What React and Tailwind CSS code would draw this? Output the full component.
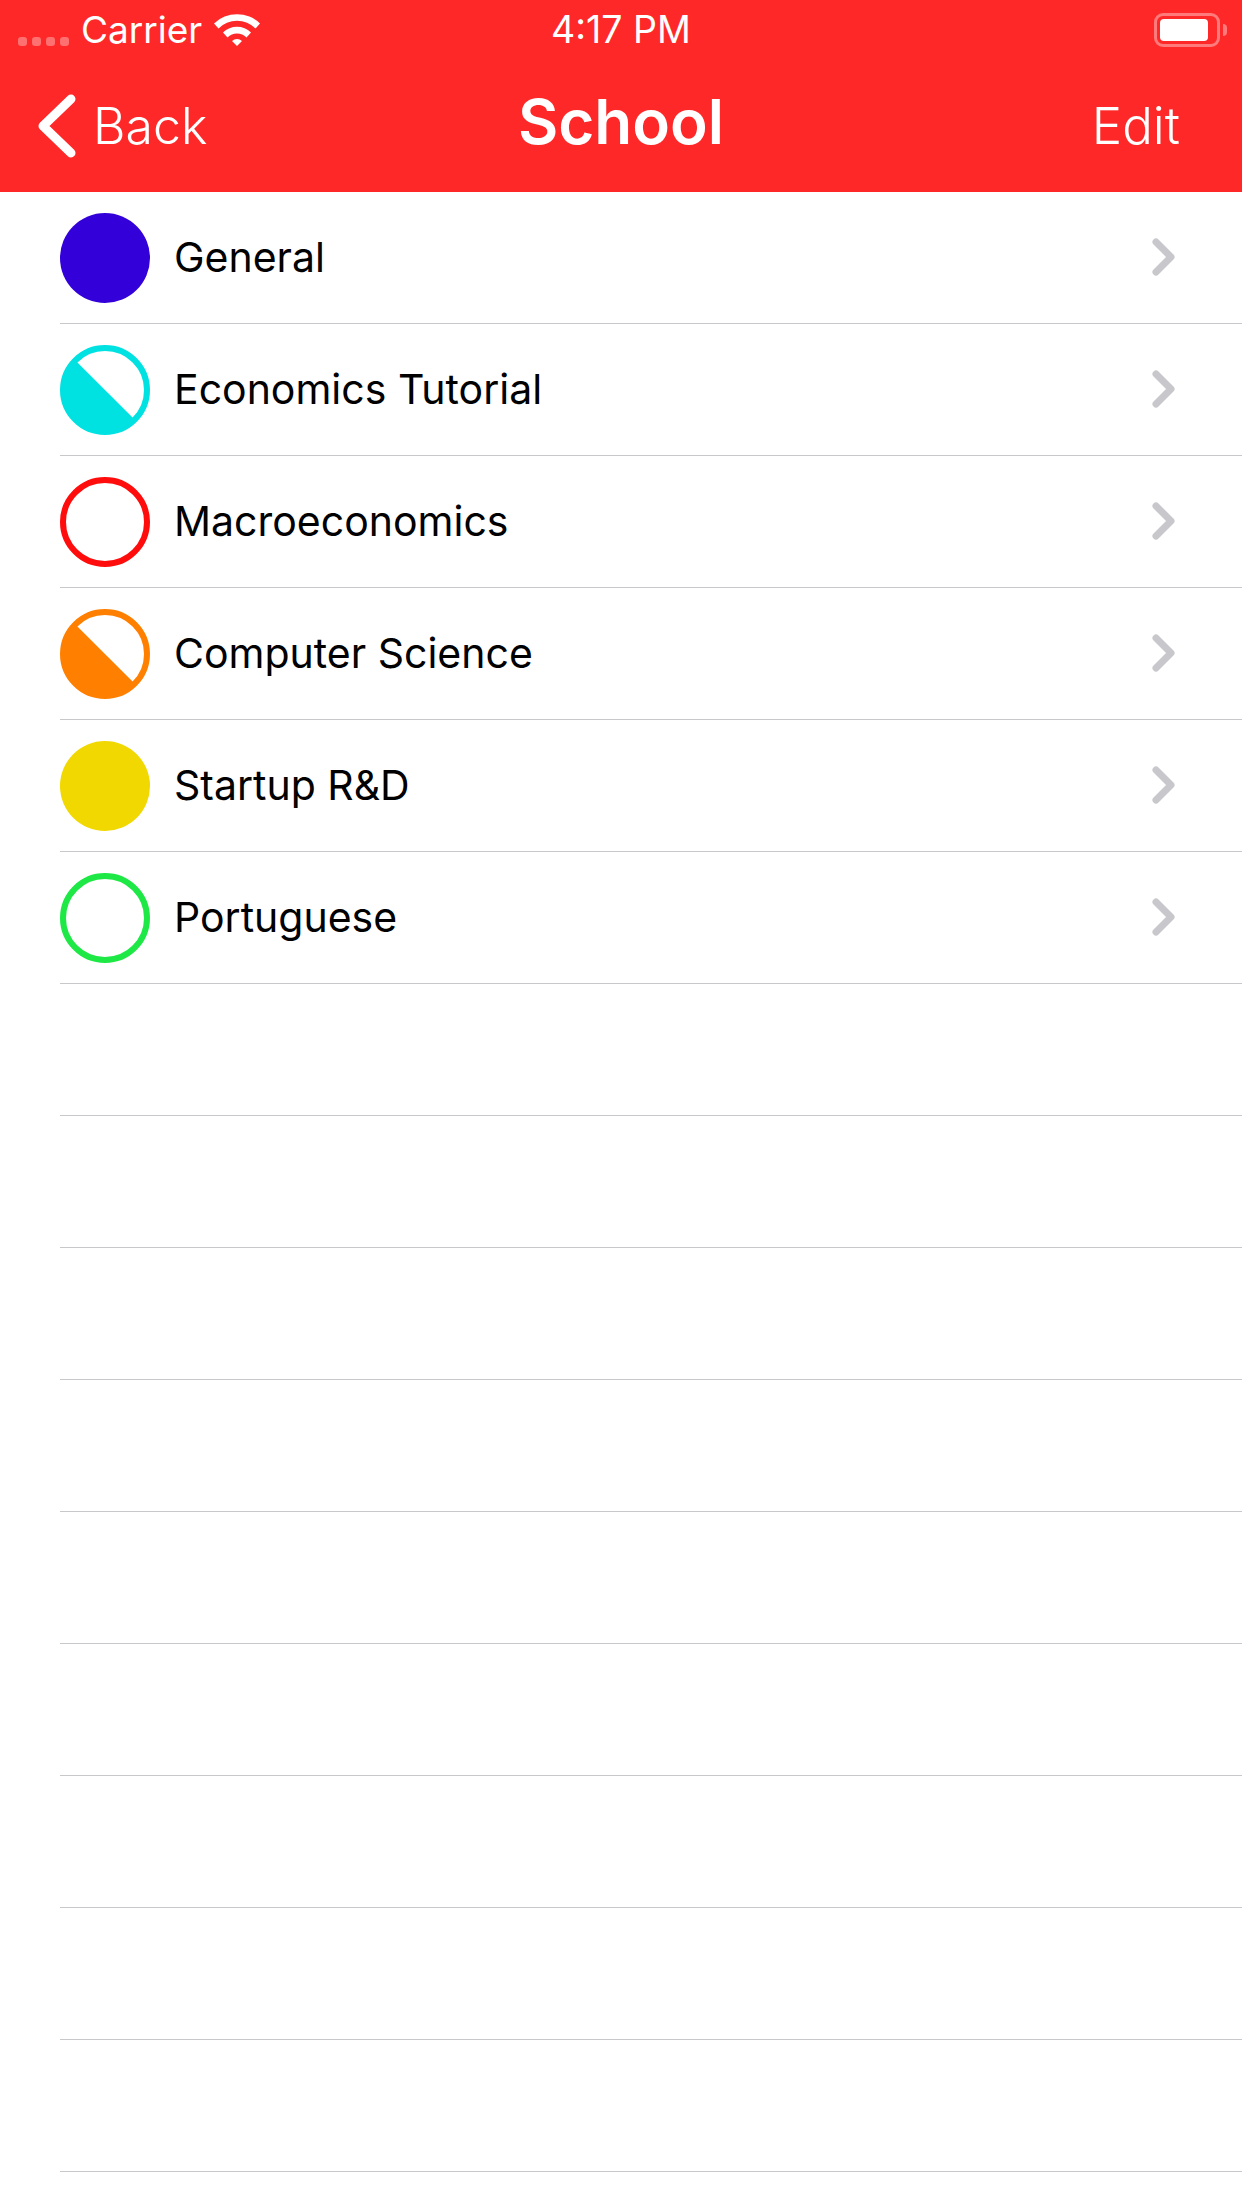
const subjects = [
  { name: "General", color: "#3300d9", type: "full" },
  { name: "Economics Tutorial", color: "#00e1e1", type: "half" },
  { name: "Macroeconomics", color: "#ff0d0d", type: "empty" },
  { name: "Computer Science", color: "#ff8000", type: "half" },
  { name: "Startup R&D", color: "#f0d800", type: "full" },
  { name: "Portuguese", color: "#1ee845", type: "empty" },
];

const emptyRows = [1, 2, 3, 4, 5, 6, 7, 8, 9];

function Dot({ color, type }) {
  return (
    <svg width="90" height="90" viewBox="0 0 90 90" className="shrink-0">
      {type === "full" ? (
        <circle cx="45" cy="45" r="45" fill={color} />
      ) : (
        <circle cx="45" cy="45" r="42" fill="none" stroke={color} strokeWidth="6" />
      )}
      {type === "half" && <path d="M16.7 16.7 L73.3 73.3 A40 40 0 0 1 16.7 16.7 Z" fill={color} />}
    </svg>
  );
}

function Wifi() {
  return (
    <svg width="46" height="34" viewBox="0 0 46 34" className="ml-[12px] mb-[2px]">
      <path d="M0 11.5 A33 33 0 0 1 46 11.5 L41.5 16.5 A26 26 0 0 0 4.5 16.5 Z" fill="white" />
      <path d="M9 20.5 A20 20 0 0 1 37 20.5 L32.5 25.5 A13.5 13.5 0 0 0 13.5 25.5 Z" fill="white" />
      <path d="M18 29 A7.5 7.5 0 0 1 28 29 L23 34 Z" fill="white" />
    </svg>
  );
}

function Battery() {
  return (
    <div className="flex items-center">
      <div className="w-[66px] h-[34px] rounded-[9px] border-[3px] border-[#ff7a7a] p-[3px]">
        <div className="w-[48px] h-full rounded-[4px] bg-white"></div>
      </div>
      <div className="ml-[3px] w-[4px] h-[12px] rounded-r-full bg-[#ff7a7a]"></div>
    </div>
  );
}

export default function App() {
  return (
    <div className="w-[1242px] h-[2208px] overflow-hidden bg-white text-black font-['Inter',sans-serif]">
      {/* barra de estado + navegacion */}
      <div className="h-[192px] bg-[#ff2828] text-white">
        <div className="h-[60px] grid grid-cols-[1fr_auto_1fr] items-center">
          <div className="flex items-center pl-[18px]">
            <div className="flex gap-[5px] mt-[22px]">
              <span className="w-[9px] h-[9px] rounded-[3px] bg-[#ff7070]"></span>
              <span className="w-[9px] h-[9px] rounded-[3px] bg-[#ff7070]"></span>
              <span className="w-[9px] h-[9px] rounded-[3px] bg-[#ff7070]"></span>
              <span className="w-[9px] h-[9px] rounded-[3px] bg-[#ff7070]"></span>
            </div>
            <span className="ml-[12px] text-[37px] leading-[60px]">Carrier</span>
            <Wifi />
          </div>
          <div className="text-[37.5px] leading-[60px]">4:17 PM</div>
          <div className="flex justify-end pr-[15px]">
            <Battery />
          </div>
        </div>
        <div className="h-[132px] grid grid-cols-[1fr_auto_1fr] items-center">
          <div className="flex items-center pl-[38px]">
            <svg width="38" height="64" viewBox="0 0 38 64" fill="none">
              <path d="M33 5 L5 32 L33 59" stroke="white" strokeWidth="9" strokeLinecap="round" strokeLinejoin="round" />
            </svg>
            <span className="ml-[17px] text-[50px] leading-[60px] font-[350]">Back</span>
          </div>
          <div className="mb-[9px] text-[62px] leading-[72px] font-semibold">School</div>
          <div className="flex justify-end pr-[62px] text-[51px] leading-[60px] font-[350]">Edit</div>
        </div>
      </div>

      {subjects.map((s) => (
        <div key={s.name} className="ml-[60px] h-[132px] border-b border-[#c8c7cc] flex items-center">
          <Dot color={s.color} type={s.type} />
          <span className="ml-[24px] mb-[2px] flex-1 text-[41px] leading-[50px]">{s.name}</span>
          <svg width="24" height="38" viewBox="0 0 24 38" fill="none" className="mr-[66px] mb-[2px]">
            <path d="M4 4 L19 19 L4 34" stroke="#c7c7cc" strokeWidth="7" strokeLinecap="round" strokeLinejoin="round" />
          </svg>
        </div>
      ))}
      {emptyRows.map((n) => (
        <div key={n} className="ml-[60px] h-[132px] border-b border-[#c8c7cc]"></div>
      ))}
    </div>
  );
}
